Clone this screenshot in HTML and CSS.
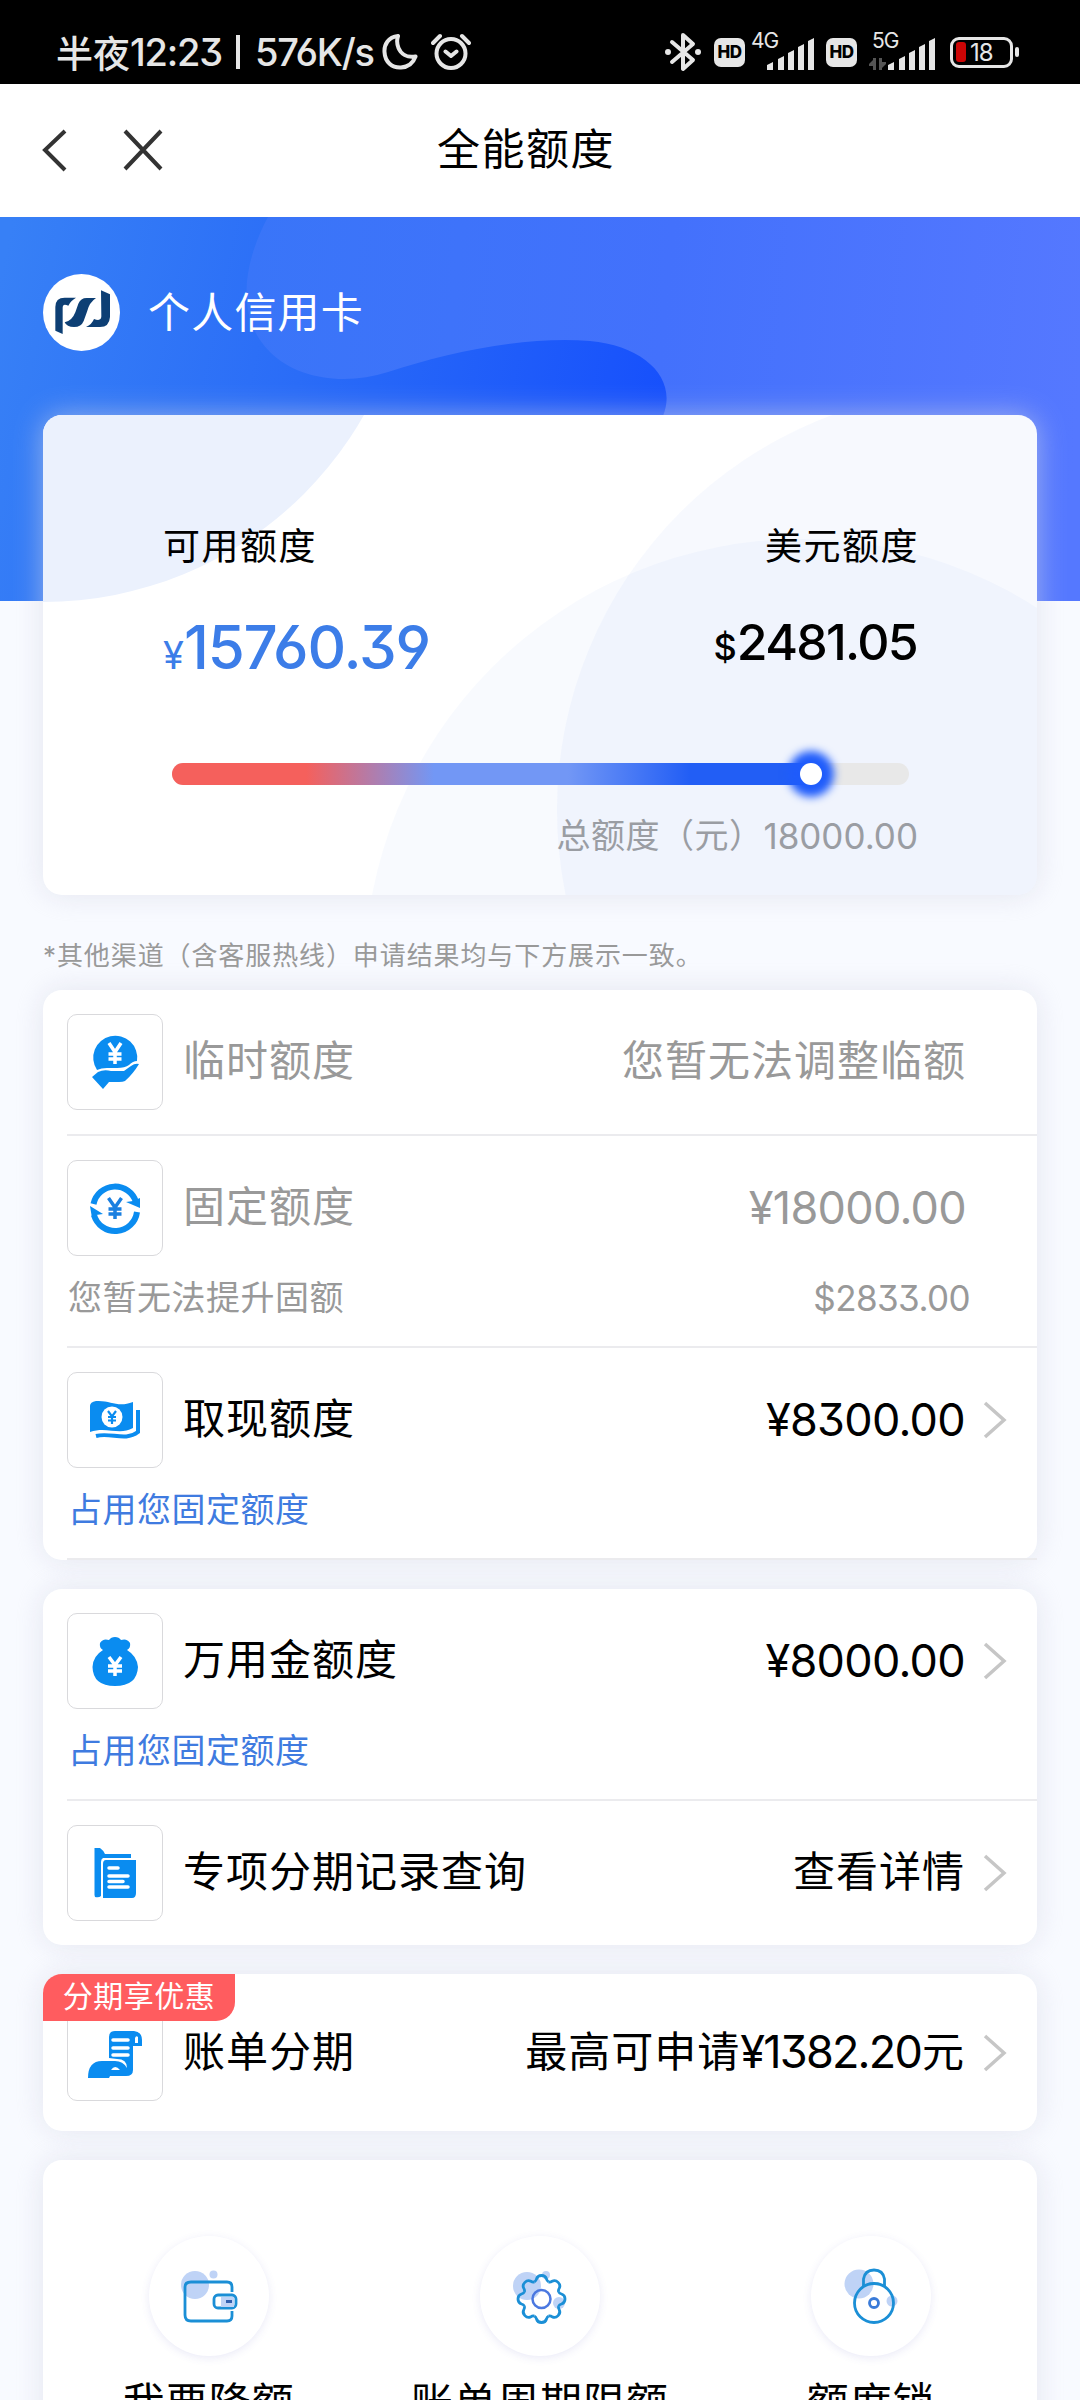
FILE: index.html
```
<!DOCTYPE html>
<html lang="zh-CN">
<head>
<meta charset="utf-8">
<title>全能额度</title>
<link rel="stylesheet" href="styles.css">
</head>
<body>
<div class="screen">
  <div class="status">
    <div class="status-left">
      <span>半夜</span><span class="status-num">12:23</span><span class="status-bar"></span><span class="status-num">576K/s</span>
      <svg class="moon" width="36" height="38" viewBox="0 0 36 38"><path d="M16 3C6 4 2 12 2.500 19C3 29 10 35 19 34.500C27 34 31.500 29 33.500 23.500C25 25 19 21 16.500 15C14.500 10 15 6 16 3Z"/></svg>
      <svg class="alarm" width="40" height="38" viewBox="0 0 40 38"><circle cx="20" cy="20.500" r="14.500"/><path d="M14.500 18.500L20 23L25.500 18.500M2 10L9 3M38 10L31 3"/></svg>
    </div>
    <div class="status-right">
      <svg class="bt" width="36" height="40" viewBox="0 0 36 40"><path d="M7 10L28 28L18 37V3L28 12L7 30"/><circle cx="3" cy="20" r="3"/><circle cx="33" cy="20" r="3"/></svg>
      <span class="hd hd-one">HD</span>
      <div class="signal"><span class="gen">4G</span><svg width="48" height="32" viewBox="0 0 48 32"><path d="M0 27L6 24V32H0ZM11 21L17 18V32H11ZM21 15L27 12V32H21ZM31 9L37 6V32H31ZM41 3L47 0V32H41Z"/></svg></div>
      <span class="hd hd-two">HD</span>
      <div class="signal signal-five"><span class="gen">5G</span><svg class="arrows" width="17" height="12" viewBox="0 0 17 12"><path d="M0 6L4 2V0H7V12H4V8H0ZM17 6L13 10V12H10V0H13V4H17Z"/></svg><svg width="48" height="32" viewBox="0 0 48 32"><path d="M0 27L6 24V32H0ZM11 21L17 18V32H11ZM21 15L27 12V32H21ZM31 9L37 6V32H31ZM41 3L47 0V32H41Z"/></svg></div>
      <div class="battery"><i class="battery-level"></i><span>18</span></div><i class="battery-tip"></i>
    </div>
  </div>

  <header class="nav">
    <svg class="nav-icons" width="130" height="46" viewBox="0 0 130 46"><path d="M25 4L5 23L25 43M85 4L121 42M121 4L85 42"/></svg>
    <h1>全能额度</h1>
  </header>

  <main>
    <svg class="hero" width="1080" height="384" viewBox="0 0 1080 384">
      <defs>
        <linearGradient id="base" gradientUnits="userSpaceOnUse" x1="0" y1="60" x2="680" y2="200"><stop offset="0" stop-color="#3780f6"/><stop offset=".45" stop-color="#2a6cf7"/><stop offset="1" stop-color="#164ffc"/></linearGradient>
        <linearGradient id="wave" gradientUnits="userSpaceOnUse" x1="240" y1="100" x2="1080" y2="180"><stop offset="0" stop-color="#3975f8"/><stop offset=".5" stop-color="#4371fc"/><stop offset="1" stop-color="#5578ff"/></linearGradient>
      </defs>
      <rect width="1080" height="384" fill="url(#base)"/>
      <path d="M268 0C240 52 238 104 270 135C297 162 345 169 388 155C450 135 525 119 590 124C645 129 678 162 663 199C650 260 640 320 640 384H1080V0Z" fill="url(#wave)"/>
    </svg>
    <div class="owner">
      <svg width="77" height="77" viewBox="21 21 231 231"><circle cx="136.500" cy="136.500" r="115.500" fill="#fff"/><g fill="#0d3f74"><path d="M58 191V120Q58 92 86 92H120Q104 101 97 116Q80 108 80 122V201Z"/><path d="M180 93H152Q134 93 127 110L118 136Q108 162 86 166Q92 180 114 180Q136 180 143 162L153 134Q160 106 180 93Z"/><path d="M195 70L222 82V150Q220 180 192 180H150Q168 172 174 156Q196 164 196 148Z"/></g></svg>
      <span>个人信用卡</span>
    </div>

    <section class="balance">
      <svg class="balance-bg" width="994" height="480" viewBox="43 415 994 480"><circle cx="43" cy="233" r="369" fill="#ebf1fd"/><circle cx="978" cy="810" r="421" fill="#4477ee" fill-opacity=".045"/><circle cx="801.500" cy="976" r="437" fill="#4477ee" fill-opacity=".04"/></svg>
      <div class="balance-body">
        <div class="balance-cols">
          <div><p class="balance-label">可用额度</p><p class="avail"><small>¥</small>15760.39</p></div>
          <div class="col-right"><p class="balance-label">美元额度</p><p class="usd"><small>$</small>2481.05</p></div>
        </div>
        <div class="track"><div class="fill" style="width:86.7%"></div><i class="thumb"></i></div>
        <p class="total"><span>总额度（元）</span><span class="num">18000.00</span></p>
      </div>
    </section>

    <p class="note">*其他渠道（含客服热线）申请结果均与下方展示一致。</p>

    <section class="card">
      <div class="item muted">
        <div class="row">
          <span class="tile"><svg width="96" height="96" viewBox="0 0 96 96"><path class="solid" d="M30 56A22 22 0 1 1 70 47Q66 47 62 51Q58 54 50 54H40Q34 54 30 56Z"/><path class="solid" d="M25 63L31 58Q37 55 44 57H57Q61 54 64 52Q68 49 72 50Q66 60 58 67Q56 68 52 68H42L36 75Z"/><path class="yen-white" d="M42 29L48 38L54 29M48 38V50M41.500 40H54.500M41.500 45H54.500"/></svg></span>
          <span class="label">临时额度</span><span class="value"><span class="text">您暂无法调整临额</span></span><i class="gap"></i>
        </div>
      </div>
      <div class="item muted">
        <div class="row">
          <span class="tile"><svg width="96" height="96" viewBox="0 0 96 96"><path class="ring" d="M26.500 44A22 22 0 0 1 69 42M70 52A22 22 0 0 1 27 55"/><path class="solid" d="M59 42L66 41L73 38V48ZM23 46L36 54L29 55L25 58Z"/><path class="yen-blue" d="M41.500 38L48 47.500L54.500 38M48 47V59M41.500 49H54.500M41.500 54H54.500"/></svg></span>
          <span class="label">固定额度</span><span class="value num">¥18000.00</span><i class="gap"></i>
        </div>
        <div class="sub"><span>您暂无法提升固额</span><span class="num sub-num">$2833.00</span></div>
      </div>
      <div class="item">
        <div class="row">
          <span class="tile"><svg width="96" height="96" viewBox="0 0 96 96"><path class="solid" d="M23 34Q23 30 29 29C44 28 50 36 66 30V56C52 64 40 54 23 60Z"/><path class="line" d="M71 38V60C58 70 44 60 29 64"/><circle cx="45" cy="45" r="10.500" fill="#fff"/><path class="yen-small" d="M41 39L45 44.500L49 39M45 44V52M41 45H49M41 48.500H49"/></svg></span>
          <span class="label">取现额度</span><span class="value num">¥8300.00</span>
          <svg class="chev" width="24" height="38" viewBox="0 0 24 38"><path d="M2 2L21 19L2 36"/></svg>
        </div>
        <div class="sub link">占用您固定额度</div>
      </div>
    </section>

    <section class="card">
      <div class="item">
        <div class="row">
          <span class="tile"><svg width="96" height="96" viewBox="0 0 96 96"><path class="solid" d="M36 37Q32 35 33 30Q36 25 42 27Q44 24 48 24Q52 24 54 27Q60 25 63 30Q64 35 60 37Q70 43 71 54Q70 73 48 73Q26 73 25.500 54Q26 43 36 37Z"/><path class="yen-white" d="M42 44L48 52L54 44M48 52V63M41 53H55M41 58H55"/></svg></span>
          <span class="label">万用金额度</span><span class="value num">¥8000.00</span>
          <svg class="chev" width="24" height="38" viewBox="0 0 24 38"><path d="M2 2L21 19L2 36"/></svg>
        </div>
        <div class="sub link">占用您固定额度</div>
      </div>
      <div class="item last">
        <div class="row">
          <span class="tile"><svg width="96" height="96" viewBox="0 0 96 96"><path class="solid" d="M27.500 23H33Q36 25 38 29H64V33H36Q34 34 34 37V71Q32 73 28 72L27.500 70Z"/><path class="solid" d="M36 39Q36 35 39 35H69V68Q69 73 65 73H36Z"/><path class="holes" d="M42 43H51M42 51H61M42 56.500H56M42 62H61"/></svg></span>
          <span class="label">专项分期记录查询</span><span class="value"><span class="text">查看详情</span></span>
          <svg class="chev" width="24" height="38" viewBox="0 0 24 38"><path d="M2 2L21 19L2 36"/></svg>
        </div>
      </div>
    </section>

    <section class="card bill">
      <span class="tag">分期享优惠</span>
      <div class="row">
        <span class="tile"><svg width="96" height="96" viewBox="0 0 96 96"><path class="solid" d="M42 53V32Q42 26 48 26H67Q75 27 75 35V41H66V65Q66 71 59 71H43L42 73H21Q21 56 35 56H48Q56 56 60 63Q60 54 50 54Z"/><path d="M68 38V33Q69 30 71 32V38Z" fill="#fff"/><path class="holes" d="M46 35H61M46 43H61M46 50H61"/><path d="M44 65Q48 59 53 65Z" fill="#fff"/></svg></span>
        <span class="label">账单分期</span><span class="value"><span class="text">最高可申请</span><span class="num tight">¥1382.20</span><span class="text">元</span></span>
        <svg class="chev" width="24" height="38" viewBox="0 0 24 38"><path d="M2 2L21 19L2 36"/></svg>
      </div>
    </section>

    <section class="card tools">
      <div class="tool">
        <span class="disc"><svg width="120" height="120" viewBox="0 0 120 120"><circle class="blob" cx="46" cy="49" r="14"/><circle class="blob" cx="64.500" cy="38.500" r="4"/><path class="stroke" d="M83 56V51Q83 46 78 46H42Q36 46 36 51V79Q36 85 42 85H78Q83 85 83 80V75"/><rect class="stroke" x="65" y="59" width="22" height="13" rx="4"/><rect class="blob" x="72" y="61" width="13" height="10"/><path d="M77 65.500H83" stroke="#315fae" stroke-width="3"/></svg></span>
        <span>我要降额</span>
      </div>
      <div class="tool">
        <span class="disc"><svg width="120" height="120" viewBox="0 0 120 120"><defs><path id="tooth" class="stroke" d="M-7.100 -17.100Q-5.500 -18 -5 -20Q-4 -23.500 0 -23.500Q4 -23.500 5 -20Q5.500 -18 7.100 -17.100"/></defs><circle class="blob" cx="47" cy="50" r="14"/><circle class="blob" cx="66" cy="39" r="4"/><circle class="blob" cx="79" cy="67" r="6"/><g transform="translate(61.500 63)"><use href="#tooth"/><use href="#tooth" transform="rotate(45)"/><use href="#tooth" transform="rotate(90)"/><use href="#tooth" transform="rotate(135)"/><use href="#tooth" transform="rotate(180)"/><use href="#tooth" transform="rotate(225)"/><use href="#tooth" transform="rotate(270)"/><use href="#tooth" transform="rotate(315)"/></g><circle cx="61.500" cy="63" r="9" fill="none" stroke="#4b78e0" stroke-width="2.500"/></svg></span>
        <span>账单周期限额</span>
      </div>
      <div class="tool">
        <span class="disc"><svg width="120" height="120" viewBox="0 0 120 120"><circle class="blob" cx="48" cy="48" r="14.500"/><circle class="blob" cx="81" cy="65" r="5.500"/><path class="stroke" d="M52.500 50V43Q54 34 63 34Q72 34 73.500 43V50"/><circle class="stroke" cx="63" cy="67" r="19.500"/><circle cx="63" cy="67" r="4.500" fill="none" stroke="#3a7bd8" stroke-width="2.800"/></svg></span>
        <span>额度锁</span>
      </div>
    </section>
  </main>
</div>
</body>
</html>
```
FILE: styles.css
```
* { box-sizing: border-box; }
body { margin: 0; background: #f8faff; font-family: Inter, "Noto Sans CJK SC", sans-serif; font-feature-settings: "cv03", "cv04", "cv09"; color: #000; }
p, h1 { margin: 0; font-weight: 400; }
svg { display: block; flex: none; }
.screen { width: 1080px; height: 2400px; overflow: hidden; position: relative; }

.status { height: 84px; background: #000; color: #e6e6e6; display: flex; justify-content: space-between; padding: 20px 62px 0 56px; font-weight: 500; }
.status-left, .status-right { display: flex; align-items: center; height: 64px; white-space: nowrap; }
.status-left { font-size: 37px; padding-bottom: 1px; }
.status-num { font-size: 38px; letter-spacing: -1.2px; }
.status-bar { width: 4px; height: 34px; background: #e6e6e6; margin: 0 15px 0 14px; }
.moon, .alarm, .bt { fill: none; stroke: #e6e6e6; stroke-width: 4; stroke-linecap: round; stroke-linejoin: round; }
.moon { margin-left: 8px; }
.alarm { margin-left: 13px; }
.bt circle { fill: #e6e6e6; stroke: none; }
.hd { width: 31px; height: 29px; border-radius: 7px; background: #e6e6e6; color: #000; font-size: 17px; letter-spacing: -.4px; line-height: 29px; font-weight: 800; text-align: center; }
.hd-one { margin: 0 6px 0 13px; }
.hd-two { margin: 0 12px 0 11px; }
.signal { position: relative; width: 64px; height: 36px; display: flex; justify-content: flex-end; align-items: flex-end; fill: #e6e6e6; }
.signal-five { width: 67px; }
.gen { position: absolute; left: 0; top: -5px; font-size: 21px; line-height: 24px; font-weight: 400; letter-spacing: -1px; }
.signal-five .gen { left: 3px; }
.arrows { fill: #555; margin-right: 2px; }
.battery { width: 63px; height: 31px; border: 3px solid #e6e6e6; border-radius: 9px; margin-left: 14px; display: flex; align-items: center; padding-left: 3px; font-size: 24px; font-weight: 400; gap: 4px; letter-spacing: -1px; }
.battery-level { width: 10px; height: 20px; border-radius: 3px; background: #cc0505; }
.battery-tip { width: 4px; height: 10px; border-radius: 2px; background: #e6e6e6; margin-left: 2px; margin-right: -22px; }
.status-right { margin-right: 21px; }

.nav { height: 133px; background: #fff; display: grid; grid-template-columns: 1fr auto 1fr; align-items: center; padding: 8px 40px 0; }
.nav-icons { fill: none; stroke: #333; stroke-width: 4; margin-top: -10px; }
.nav h1 { font-size: 43px; letter-spacing: 1.5px; line-height: 60px; margin-top: -11px; transform: translateX(-14px); }

main { position: relative; padding: 0 43px; }
.hero { position: absolute; left: 0; top: 0; }
.owner { position: relative; height: 198px; padding-top: 57px; display: flex; gap: 28px; color: #fff; font-size: 42px; letter-spacing: 1.2px; line-height: 78px; }

.balance { position: relative; height: 480px; border-radius: 19px; background: #fff; box-shadow: 0 0 29px rgba(215, 217, 228, .6); }
.balance-bg { position: absolute; left: 0; top: 0; border-radius: 19px; }
.balance-body { position: relative; padding: 105px 119px 0 120px; }
.balance-cols { display: flex; justify-content: space-between; }
.balance-label { font-size: 37px; letter-spacing: 1.5px; line-height: 54px; }
.col-right { text-align: right; }
.col-right .balance-label { margin-right: -1px; }
.avail { color: #3c7de8; font-size: 60px; font-weight: 500; letter-spacing: -1.15px; line-height: 70px; margin-top: 38px; }
.avail small { font-size: 38px; font-weight: 400; letter-spacing: 0; }
.usd { font-size: 50px; font-weight: 500; letter-spacing: -1.7px; line-height: 70px; margin-top: 33px; margin-right: 1px; }
.usd small { font-size: 36px; letter-spacing: 0; }
.track { height: 22px; margin: 73px 9px 0 9px; border-radius: 11px; background: #e8e8e8; display: flex; align-items: center; }
.fill { height: 22px; border-radius: 11px 0 0 11px; background: linear-gradient(90deg, #f5605c 21%, #7297f5 41%, #7297f5 62%, #225ef5 81%); }
.thumb { width: 22px; height: 22px; border-radius: 50%; background: #fff; margin-left: -11px; box-shadow: 0 0 8px 12px #1f5cfb; }
.total { display: flex; justify-content: flex-end; color: #9a9da3; font-size: 34px; letter-spacing: .5px; line-height: 50px; margin-top: 26px; }
.total .num { font-size: 35px; letter-spacing: 0; }

.note { font-size: 26px; letter-spacing: .9px; line-height: 38px; color: #999; margin: 42px 0 0; height: 53px; }

.card { position: relative; width: 994px; background: #fff; border-radius: 19px; box-shadow: 0 0 29px rgba(215, 217, 228, .6); margin-bottom: 29px; }
.item { margin-left: 24px; padding-top: 24px; padding-bottom: 24px; border-bottom: 2px solid #ebebee; }
.item.last { border-bottom: 0; }
.row { display: flex; align-items: center; height: 96px; font-size: 42px; letter-spacing: 1px; }
.tile { width: 96px; height: 96px; border: 1px solid #d9d9dc; border-radius: 10px; margin-right: 20px; }
.tile svg { margin: -1px; }
.label, .text { padding-bottom: 9px; }
.value { margin-left: auto; margin-right: 18px; display: flex; align-items: center; }
.num { font-size: 45px; letter-spacing: -.7px; }
.value.num { padding-bottom: 2px; }
.tight { letter-spacing: -1.8px; margin: 0 1px 3px 0; }
.muted { color: #999; }
.gap { width: 53px; }
.chev { margin-right: 30px; fill: none; stroke: #c6c6c6; stroke-width: 3.5; }
.sub { display: flex; justify-content: space-between; font-size: 34px; letter-spacing: .5px; line-height: 46px; margin: 19px 67px 1px 1px; height: 46px; }
.sub-num { font-size: 35px; letter-spacing: -.6px; }
.solid { fill: #0a8cf0; }
.link { color: #3f7be0; }
.ring, .line, .yen-blue, .yen-small, .yen-white, .holes { fill: none; }
.ring { stroke: #0a8cf0; stroke-width: 6; }
.line { stroke: #0a8cf0; stroke-width: 4; }
.yen-white { stroke: #fff; stroke-width: 3.5; }
.yen-blue { stroke: #1a7fe0; stroke-width: 3.5; }
.yen-small { stroke: #0a8cf0; stroke-width: 2.2; }
.holes { stroke: #fff; stroke-width: 3.5; stroke-linecap: round; }

.bill { height: 157px; padding: 31px 0 0 24px; }
.tag { position: absolute; left: 0; top: 0; z-index: 1; width: 192px; height: 47px; border-radius: 19px 0; background: #ff5c5f; color: #fff; font-size: 30px; letter-spacing: .5px; line-height: 44px; text-align: center; white-space: nowrap; }

.tools { display: grid; grid-template-columns: repeat(3, 1fr); height: 320px; padding-top: 76px; margin-bottom: 0; }
.tool { display: flex; flex-direction: column; align-items: center; gap: 17px; font-size: 42px; letter-spacing: 1px; line-height: 60px; }
.disc { width: 120px; height: 120px; border-radius: 50%; background: #fff; box-shadow: 0 2px 9px rgba(80, 80, 190, .12); }
.blob { fill: #bfd3f6; }
.stroke { fill: none; stroke: #1b8fd6; stroke-width: 2.8; }
```
